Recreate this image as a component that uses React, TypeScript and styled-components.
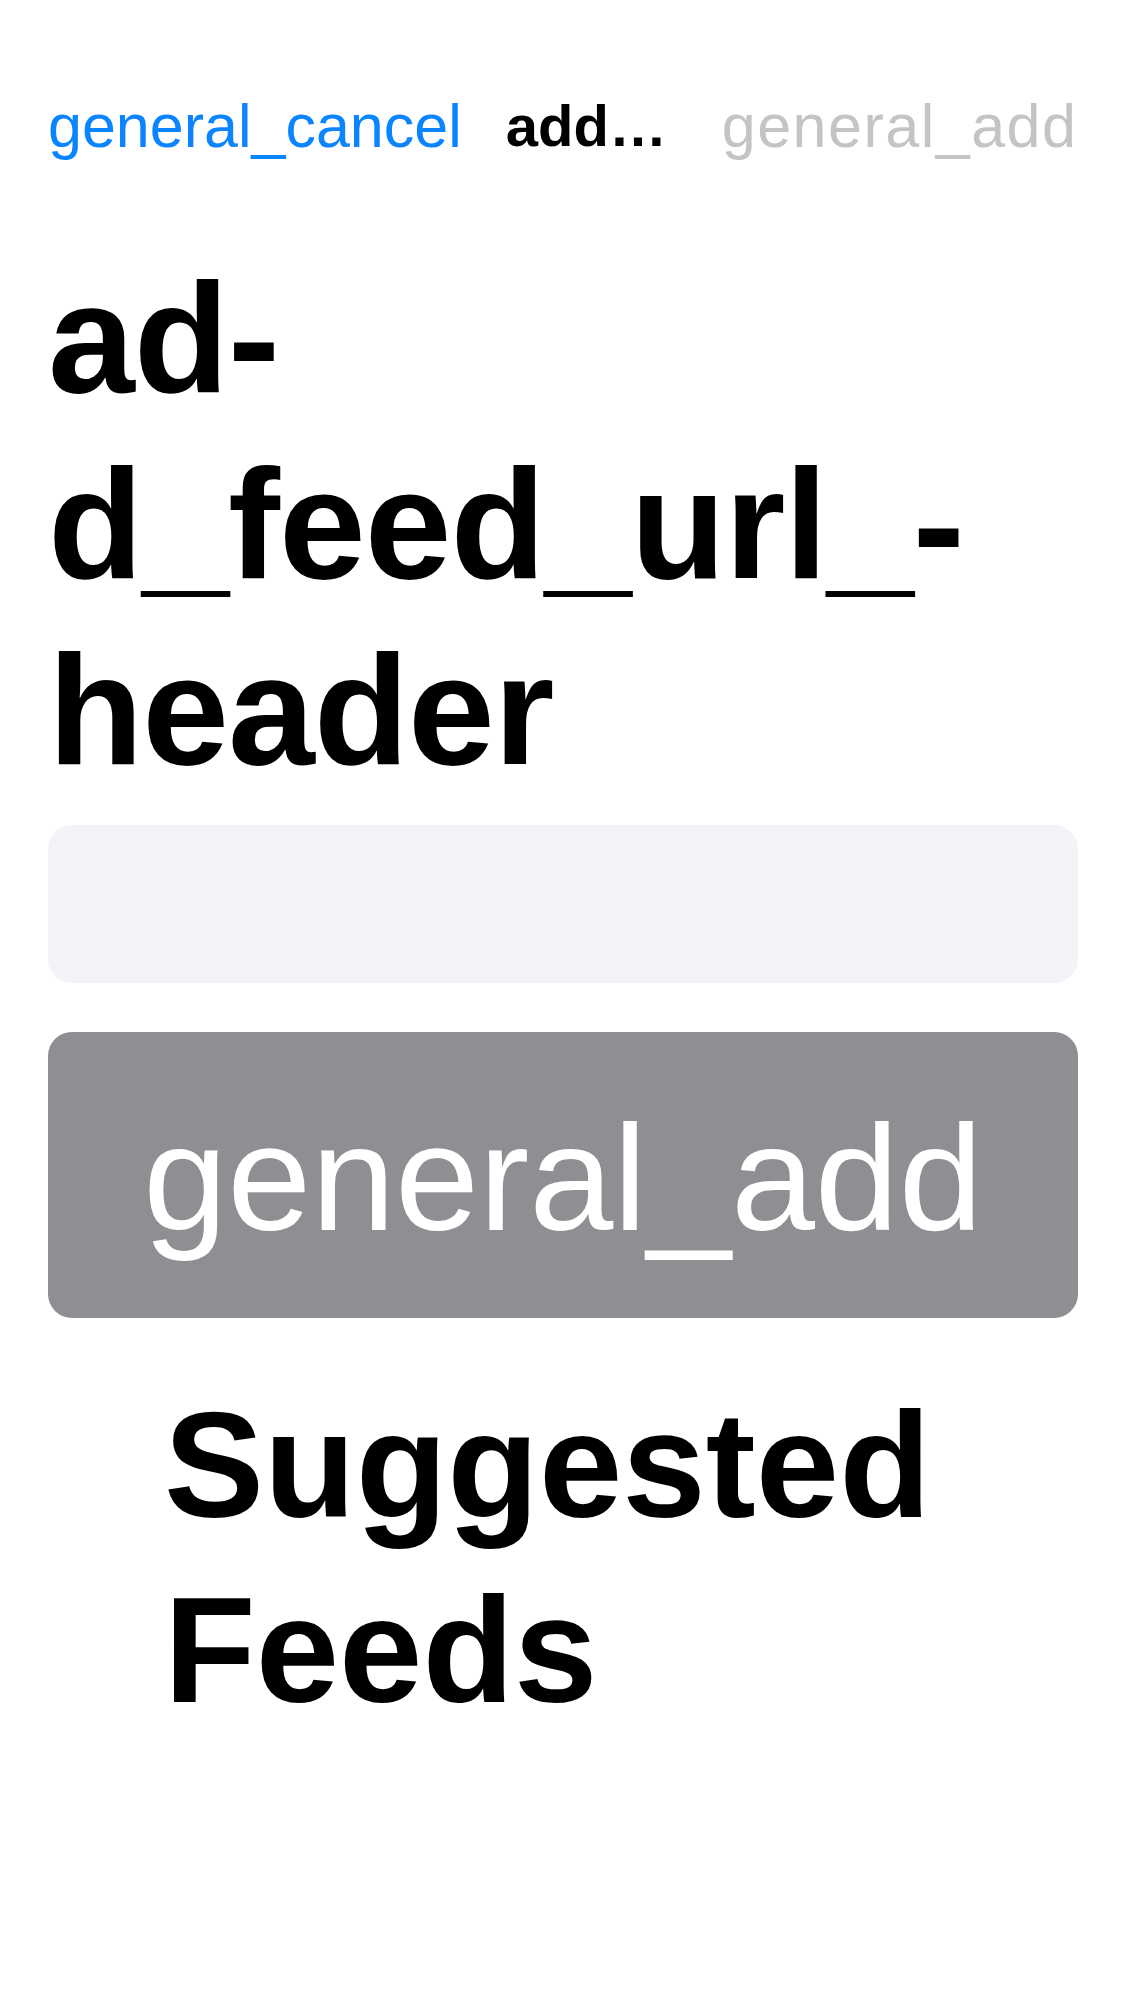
import { FC, useState } from "react";
import styled, { createGlobalStyle } from "styled-components";

const GlobalStyle = createGlobalStyle`
  html, body {
    margin: 0;
    padding: 0;
    background: #ffffff;
  }
  body {
    font-family: "Liberation Sans", Arial, sans-serif;
    color: #000000;
  }
`;

const App: FC = () => {
  const [url, setUrl] = useState<string>("");

  return (
    <>
      <GlobalStyle />
      <Screen>
        <NavBar>
          <NavButton tone="#0a84ff">general_cancel</NavButton>
          <NavTitle>add_feed_url_header</NavTitle>
          <NavButton tone="#c4c4c6" spacing={1.5} disabled>
            general_add
          </NavButton>
        </NavBar>

        <Content>
          <Header>
            ad-
            <br />
            d_feed_url_-
            <br />
            header
          </Header>
          <UrlInput
            value={url}
            onChange={(e: React.ChangeEvent<HTMLInputElement>) =>
              setUrl(e.target.value)
            }
          />
          <AddButton disabled={url.trim().length === 0}>general_add</AddButton>
        </Content>

        <SectionTitle>
          Suggested
          <br />
          Feeds
        </SectionTitle>
      </Screen>
    </>
  );
};

export default App;

const Screen = styled.div`
  width: 1125px;
  min-height: 2001px;
  display: flex;
  flex-direction: column;
`;

const NavBar = styled.div`
  display: flex;
  align-items: center;
  gap: 44px;
  padding: 90px 48px 0;
  height: 72px;
`;

const NavButton = styled.button<{ tone: string; spacing?: number }>`
  border: none;
  background: none;
  padding: 0;
  font-family: "Liberation Sans", Arial, sans-serif;
  font-size: 61px;
  line-height: 72px;
  letter-spacing: ${(p) => p.spacing ?? 0}px;
  color: ${(p) => p.tone};
  white-space: nowrap;
  cursor: pointer;

  &:last-child {
    margin-left: auto;
  }

  &:disabled {
    cursor: default;
  }
`;

const NavTitle = styled.div`
  width: 172px;
  flex-shrink: 0;
  font-size: 58px;
  line-height: 72px;
  font-weight: 700;
  white-space: nowrap;
  overflow: hidden;
  text-overflow: ellipsis;
`;

const Content = styled.div`
  display: flex;
  flex-direction: column;
  padding: 0 47px 0 48px;
  margin-top: 83px;
`;

const Header = styled.h1`
  margin: 0 0 22px;
  font-size: 156px;
  line-height: 186px;
  font-weight: 700;
  letter-spacing: -1px;
`;

const UrlInput = styled.input`
  height: 158px;
  box-sizing: border-box;
  border: none;
  outline: none;
  border-radius: 24px;
  background: #f2f2f7;
  padding: 0 32px;
  font-family: "Liberation Sans", Arial, sans-serif;
  font-size: 61px;
  color: #000000;
`;

const AddButton = styled.button`
  margin-top: 49px;
  height: 286px;
  border: none;
  border-radius: 24px;
  background: #8e8e93;
  color: #ffffff;
  font-family: "Liberation Sans", Arial, sans-serif;
  font-size: 151px;
  line-height: 174px;
  padding: 6px 0 0;
  display: flex;
  align-items: center;
  justify-content: center;
`;

const SectionTitle = styled.h2`
  margin: 55px 0 0;
  padding-left: 164px;
  font-size: 150px;
  line-height: 185px;
  font-weight: 700;
`;
